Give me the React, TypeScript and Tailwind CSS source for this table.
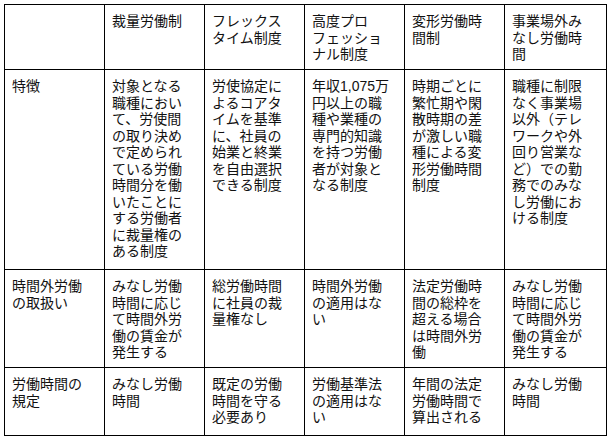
import React from "react";

const rows: string[][][] = [
  [
    [],
    ["裁量労働制"],
    ["フレックス", "タイム制度"],
    ["高度プロ", "フェッショ", "ナル制度"],
    ["変形労働時", "間制"],
    ["事業場外み", "なし労働時", "間"],
  ],
  [
    ["特徴"],
    [
      "対象となる",
      "職種におい",
      "て、労使間",
      "の取り決め",
      "で定められ",
      "ている労働",
      "時間分を働",
      "いたことに",
      "する労働者",
      "に裁量権の",
      "ある制度",
    ],
    ["労使協定に", "よるコアタ", "イムを基準", "に、社員の", "始業と終業", "を自由選択", "できる制度"],
    ["年収1,075万", "円以上の職", "種や業種の", "専門的知識", "を持つ労働", "者が対象と", "なる制度"],
    ["時期ごとに", "繁忙期や閑", "散時期の差", "が激しい職", "種による変", "形労働時間", "制度"],
    ["職種に制限", "なく事業場", "以外（テレ", "ワークや外", "回り営業な", "ど）での勤", "務でのみな", "し労働にお", "ける制度"],
  ],
  [
    ["時間外労働", "の取扱い"],
    ["みなし労働", "時間に応じ", "て時間外労", "働の賃金が", "発生する"],
    ["総労働時間", "に社員の裁", "量権なし"],
    ["時間外労働", "の適用はな", "い"],
    ["法定労働時", "間の総枠を", "超える場合", "は時間外労", "働"],
    ["みなし労働", "時間に応じ", "て時間外労", "働の賃金が", "発生する"],
  ],
  [
    ["労働時間の", "規定"],
    ["みなし労働", "時間"],
    ["既定の労働", "時間を守る", "必要あり"],
    ["労働基準法", "の適用はな", "い"],
    ["年間の法定", "労働時間で", "算出される"],
    ["みなし労働", "時間"],
  ],
];

export default function App() {
  return (
    <div className="w-[610px] h-[440px] bg-white pt-[4px] pl-[4px]">
      <div
        className="grid grid-cols-[99px_99px_99px_99px_99px_101px] grid-rows-[64px_199px_97px_67px] gap-px bg-black p-px w-[603px] text-[14px] leading-[16.5px] text-[#111]"
        style={{ fontFamily: '"Liberation Sans", "Noto Sans CJK JP", sans-serif' }}
      >
        {rows.map((row, ri) =>
          row.map((cell, ci) => (
            <div key={`${ri}-${ci}`} className="bg-white pt-[8px] pl-[7px] pr-[2px]">
              {cell.map((line, li) => (
                <div key={li} className="whitespace-nowrap">
                  {line}
                </div>
              ))}
            </div>
          ))
        )}
      </div>
    </div>
  );
}
